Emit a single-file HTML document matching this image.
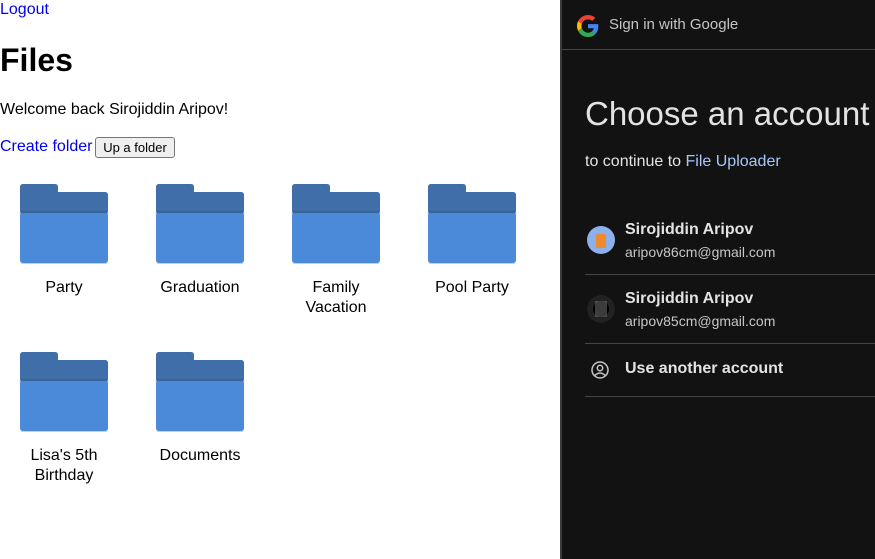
<!DOCTYPE html>
<html><head><style>
body{margin:0;width:875px;height:559px;overflow:hidden;background:#fff;font-family:"Liberation Sans",Arial,sans-serif;position:relative}
.l{position:absolute;left:0;top:0;width:560px}
a{color:#0000ee;text-decoration:none}
.f{position:absolute;width:128px;text-align:center;font-size:16px;line-height:20px;color:#000}
.f svg{display:block;margin:0 0 0 20px}
.r{position:absolute;left:560px;top:0;width:315px;height:559px;background:#121212;border-left:2px solid #3a3a3a;box-sizing:border-box;color:#e3e3e3}
.hr{position:absolute;height:1px;background:#444}
</style></head><body>
<div class="l">
<a style="position:absolute;left:0;top:0;font-size:16px;line-height:19px">Logout</a>
<div style="position:absolute;left:0;top:42px;font-size:32px;font-weight:bold;line-height:37px">Files</div>
<div style="position:absolute;left:0;top:100px;font-size:16px;line-height:20px">Welcome back Sirojiddin Aripov!</div>
<a style="position:absolute;left:0;top:137px;font-size:16px;line-height:19px">Create folder</a>
<div style="position:absolute;left:95px;top:137px;width:78px;height:19px;border:1px solid #767676;border-radius:3px;background:#efefef;font-size:13px;line-height:19px;text-align:center">Up a folder</div>
</div>
<svg width="0" height="0" style="position:absolute"><defs><g id="fd"><path d="M3 0H35Q38 0 38 3V8H85Q88 8 88 11V76H0V3Q0 0 3 0Z" fill="#3f6ea8"/><rect x="0" y="27" width="88" height="53" rx="3" fill="#cfcfcf"/><rect x="0" y="28" width="88" height="51" rx="3" fill="#4a8ad8"/><rect x="1" y="27" width="86" height="2" fill="#3a639a"/></g></defs></svg>
<div class="f" style="left:0;top:184px"><svg width="88" height="80"><use href="#fd"/></svg><div style="margin-top:14px">Party</div></div>
<div class="f" style="left:136px;top:184px"><svg width="88" height="80"><use href="#fd"/></svg><div style="margin-top:14px">Graduation</div></div>
<div class="f" style="left:272px;top:184px"><svg width="88" height="80"><use href="#fd"/></svg><div style="margin-top:14px">Family<br>Vacation</div></div>
<div class="f" style="left:408px;top:184px"><svg width="88" height="80"><use href="#fd"/></svg><div style="margin-top:14px">Pool Party</div></div>
<div class="f" style="left:0;top:352px"><svg width="88" height="80"><use href="#fd"/></svg><div style="margin-top:14px">Lisa's 5th<br>Birthday</div></div>
<div class="f" style="left:136px;top:352px"><svg width="88" height="80"><use href="#fd"/></svg><div style="margin-top:14px">Documents</div></div>
<div class="r">
<svg style="position:absolute;left:15px;top:15px" width="22" height="22" viewBox="0 0 48 48"><path fill="#EA4335" d="M24 9.5c3.5 0 6.6 1.2 9.1 3.6l6.8-6.8C35.8 2.4 30.2 0 24 0 14.6 0 6.6 5.4 2.6 13.3l7.9 6.1C12.4 13.7 17.7 9.5 24 9.5z"/><path fill="#4285F4" d="M46.5 24.5c0-1.6-.1-3.1-.4-4.5H24v9h12.6c-.5 2.9-2.2 5.4-4.7 7.1l7.6 5.9c4.4-4.1 7-10.1 7-17.5z"/><path fill="#FBBC05" d="M10.5 28.6c-.5-1.4-.8-3-.8-4.6s.3-3.2.8-4.6l-7.9-6.1C.9 16.6 0 20.2 0 24s.9 7.4 2.6 10.7l7.9-6.1z"/><path fill="#34A853" d="M24 48c6.5 0 11.9-2.1 15.9-5.8l-7.6-5.9c-2.1 1.4-4.9 2.3-8.3 2.3-6.3 0-11.6-4.2-13.5-9.9l-7.9 6.1C6.6 42.6 14.6 48 24 48z"/></svg>
<div style="position:absolute;left:47px;top:16px;font-size:15px;color:#c4c7c5">Sign in with Google</div>
<div class="hr" style="left:0;top:49px;width:313px"></div>
<div style="position:absolute;left:23px;top:95px;font-size:33px;color:#e3e3e3;white-space:nowrap">Choose an account</div>
<div style="position:absolute;left:23px;top:153px;font-size:16px;color:#e3e3e3">to continue to <span style="color:#a8c7fa">File Uploader</span></div>
<div style="position:absolute;left:25px;top:226px;width:28px;height:28px;border-radius:50%;background:#8cb0ec"><div style="position:absolute;left:9px;top:8px;width:10px;height:14px;background:#f08a2c;border-radius:2px"></div></div>
<div style="position:absolute;left:63px;top:221px;font-size:16px;font-weight:bold">Sirojiddin Aripov</div>
<div style="position:absolute;left:63px;top:244px;font-size:14px;color:#c4c7c5">aripov86cm@gmail.com</div>
<div class="hr" style="left:23px;top:274px;width:290px"></div>
<div style="position:absolute;left:25px;top:295px;width:28px;height:28px;border-radius:50%;background:#000;box-shadow:inset 0 0 0 6px #222"><div style="position:absolute;left:8px;top:6px;width:12px;height:16px;background:#777;opacity:.5"></div></div>
<div style="position:absolute;left:63px;top:290px;font-size:16px;font-weight:bold">Sirojiddin Aripov</div>
<div style="position:absolute;left:63px;top:313px;font-size:14px;color:#c4c7c5">aripov85cm@gmail.com</div>
<div class="hr" style="left:23px;top:343px;width:290px"></div>
<svg style="position:absolute;left:29px;top:361px" width="18" height="18" viewBox="0 0 18 18" fill="none" stroke="#c4c7c5" stroke-width="1.5"><circle cx="9" cy="9" r="8"/><circle cx="9" cy="7" r="2.7"/><path d="M3.8 14.5Q9 9.5 14.2 14.5"/></svg>
<div style="position:absolute;left:63px;top:360px;font-size:16px;font-weight:bold">Use another account</div>
<div class="hr" style="left:23px;top:396px;width:290px"></div>
</div>
</body></html>
